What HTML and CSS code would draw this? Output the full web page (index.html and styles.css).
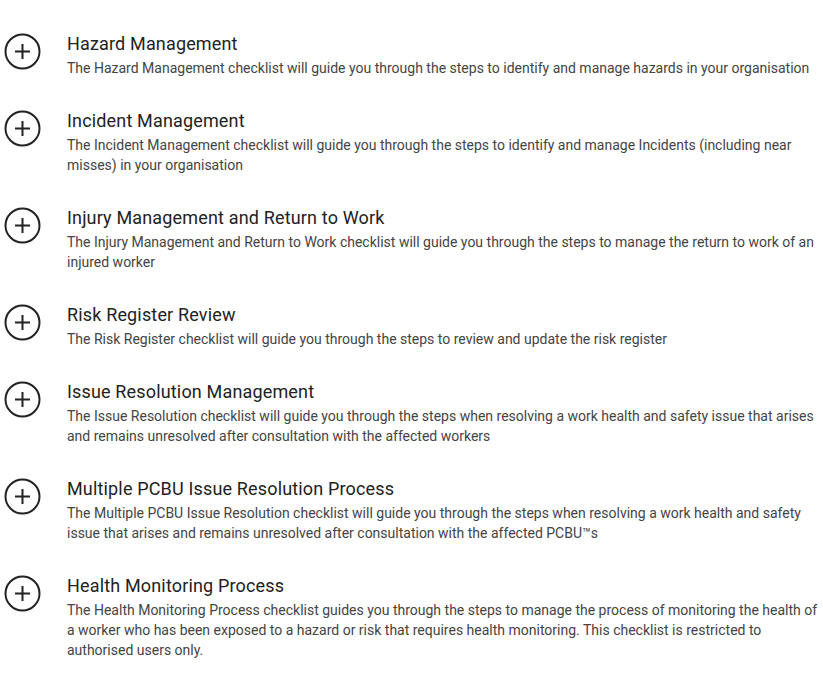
FILE: index.html
```html
<!DOCTYPE html>
<html>
<head>
<meta charset="utf-8">
<link rel="stylesheet" href="styles.css">
</head>
<body>
<ul class="list">
  <li class="item">
    <svg class="icon" viewBox="0 0 37 37"><circle cx="18.5" cy="18.5" r="17" /><path d="M18.5 11v15M11 18.5h15" /></svg>
    <div class="content">
      <h2 class="title">Hazard Management</h2>
      <p class="desc">The Hazard Management checklist will guide you through the steps to identify and manage hazards in your organisation</p>
    </div>
  </li>
  <li class="item">
    <svg class="icon" viewBox="0 0 37 37"><circle cx="18.5" cy="18.5" r="17" /><path d="M18.5 11v15M11 18.5h15" /></svg>
    <div class="content">
      <h2 class="title">Incident Management</h2>
      <p class="desc">The Incident Management checklist will guide you through the steps to identify and manage Incidents (including near misses) in your organisation</p>
    </div>
  </li>
  <li class="item">
    <svg class="icon" viewBox="0 0 37 37"><circle cx="18.5" cy="18.5" r="17" /><path d="M18.5 11v15M11 18.5h15" /></svg>
    <div class="content">
      <h2 class="title">Injury Management and Return to Work</h2>
      <p class="desc">The Injury Management and Return to Work checklist will guide you through the steps to manage the return to work of an injured worker</p>
    </div>
  </li>
  <li class="item">
    <svg class="icon" viewBox="0 0 37 37"><circle cx="18.5" cy="18.5" r="17" /><path d="M18.5 11v15M11 18.5h15" /></svg>
    <div class="content">
      <h2 class="title">Risk Register Review</h2>
      <p class="desc">The Risk Register checklist will guide you through the steps to review and update the risk register</p>
    </div>
  </li>
  <li class="item">
    <svg class="icon" viewBox="0 0 37 37"><circle cx="18.5" cy="18.5" r="17" /><path d="M18.5 11v15M11 18.5h15" /></svg>
    <div class="content">
      <h2 class="title">Issue Resolution Management</h2>
      <p class="desc">The Issue Resolution checklist will guide you through the steps when resolving a work health and safety issue that arises and remains unresolved after consultation with the affected workers</p>
    </div>
  </li>
  <li class="item">
    <svg class="icon" viewBox="0 0 37 37"><circle cx="18.5" cy="18.5" r="17" /><path d="M18.5 11v15M11 18.5h15" /></svg>
    <div class="content">
      <h2 class="title">Multiple PCBU Issue Resolution Process</h2>
      <p class="desc">The Multiple PCBU Issue Resolution checklist will guide you through the steps when resolving a work health and safety issue that arises and remains unresolved after consultation with the affected PCBU™s</p>
    </div>
  </li>
  <li class="item">
    <svg class="icon" viewBox="0 0 37 37"><circle cx="18.5" cy="18.5" r="17" /><path d="M18.5 11v15M11 18.5h15" /></svg>
    <div class="content">
      <h2 class="title">Health Monitoring Process</h2>
      <p class="desc">The Health Monitoring Process checklist guides you through the steps to manage the process of monitoring the health of a worker who has been exposed to a hazard or risk that requires health monitoring. This checklist is restricted to authorised users only.</p>
    </div>
  </li>
</ul>
</body>
</html>
```

FILE: styles.css
```css
html, body {
  margin: 0;
  padding: 0;
  background: #ffffff;
}
body {
  font-family: Roboto, "Liberation Sans", Arial, sans-serif;
  color: #333333;
}
.list {
  list-style: none;
  margin: 0;
  padding: 32px 3px 0 4px;
  display: flex;
  flex-direction: column;
  gap: 31px;
}
.item {
  display: flex;
  align-items: flex-start;
  gap: 26px;
}
.icon {
  flex: 0 0 37px;
  width: 37px;
  height: 37px;
  margin-top: 1px;
  fill: none;
  stroke: #222222;
  stroke-width: 2;
}
.content {
  flex: 1;
  min-width: 0;
}
.title {
  margin: 0 0 2px;
  font-size: 18px;
  line-height: 24px;
  font-weight: 400;
  letter-spacing: 0.16px;
  color: #222222;
}
.desc {
  margin: 0;
  font-size: 14px;
  line-height: 20px;
  color: #444444;
}
```
